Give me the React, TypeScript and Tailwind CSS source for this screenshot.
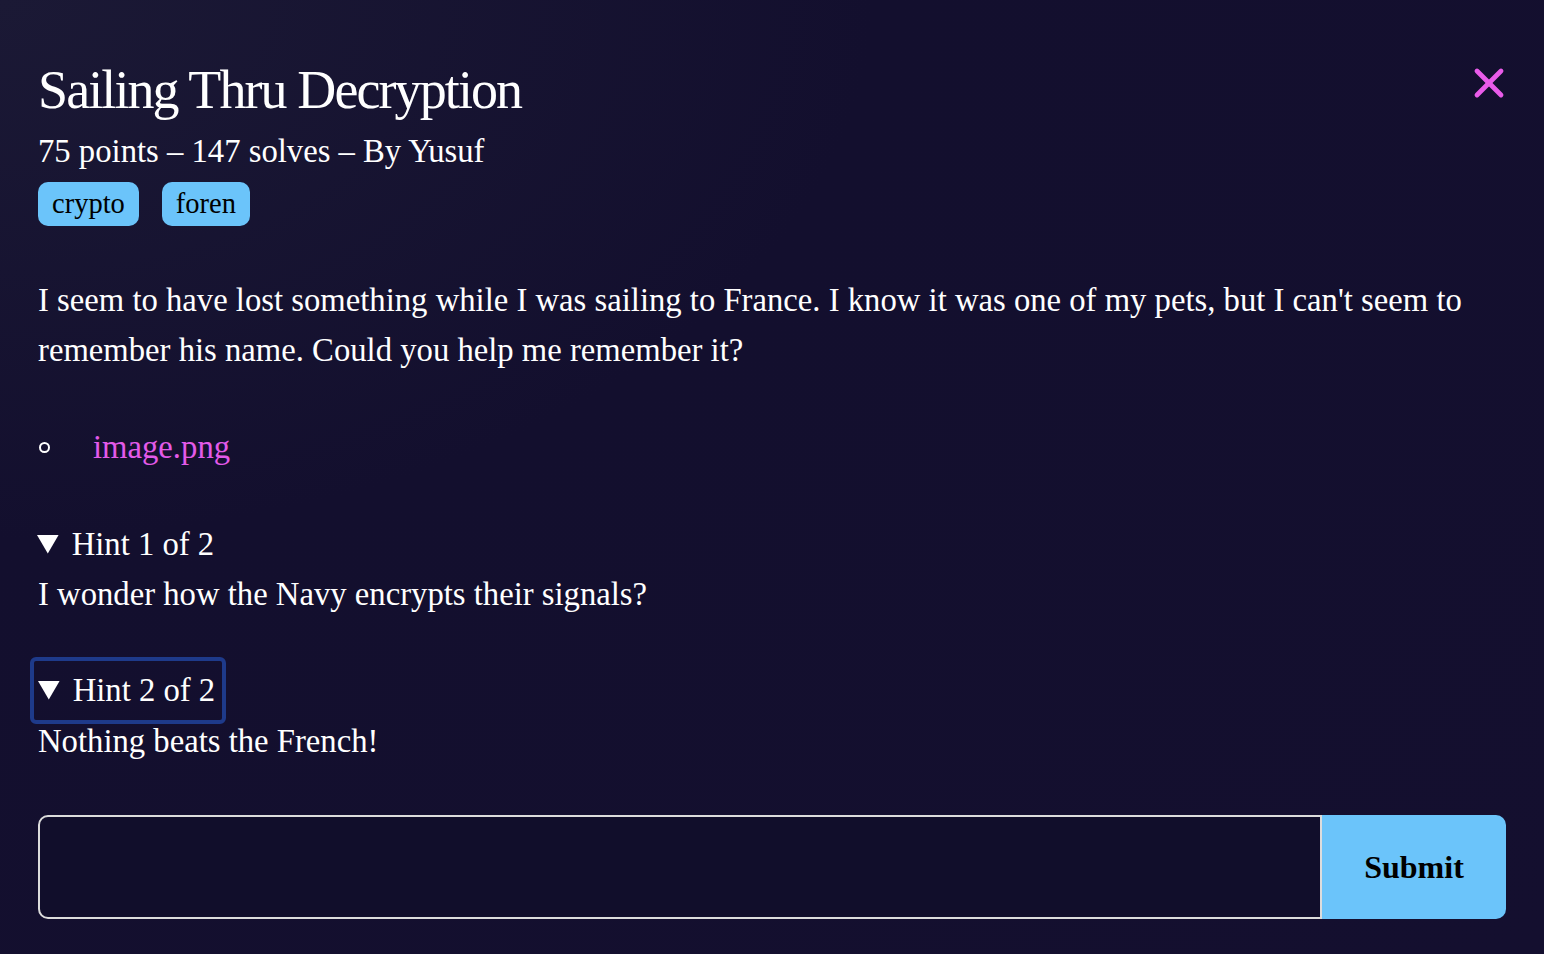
import React from "react";
import { X } from "lucide-react";

function App() {
  return (
    <div className="min-h-[954px] w-full bg-[#130f2e] bg-[radial-gradient(ellipse_at_top_left,#1b1935_0%,#130f2e_40%,#140f2f_100%)] font-['Liberation_Serif',serif] text-white">
      <div className="px-[38px] pt-[58px]">
        <div className="flex items-start justify-between">
          <div>
            <h1 className="text-[54px] leading-[64px] tracking-[-1.9px]">Sailing Thru Decryption</h1>
            <p className="mt-[9px] text-[32.7px] leading-[40px]">75 points – 147 solves – By Yusuf</p>
            <div className="mt-[11px] flex gap-[23px]">
              <span className="rounded-[10px] bg-[#6bc4fa] px-[14px] text-[28.5px] leading-[44px] text-black">crypto</span>
              <span className="rounded-[10px] bg-[#6bc4fa] px-[14px] text-[28.5px] leading-[44px] text-black">foren</span>
            </div>
          </div>
          <button className="mt-[1px] -mr-[7px] text-[#e95be9]">
            <X size={48} strokeWidth={2.4} />
          </button>
        </div>

        <p className="mt-[49px] text-[32.7px] leading-[50px]">
          I seem to have lost something while I was sailing to France. I know it was one of my pets, but I can't seem to remember his name. Could you help me remember it?
        </p>

        <ul className="mt-[47px] text-[32.7px] leading-[50px]">
          <li className="flex items-center gap-[43px]">
            <span className="ml-[1px] h-[11px] w-[11px] rounded-full border-2 border-white" />
            <a className="text-[#e35ae9]">image.png</a>
          </li>
        </ul>

        <details open className="mt-[47px] text-[32.7px] leading-[50px]">
          <summary className="-ml-[1px] w-fit cursor-pointer">Hint 1 of 2</summary>
          <p>I wonder how the Navy encrypts their signals?</p>
        </details>

        <details open className="mt-[38px] text-[32.7px] leading-[50px]">
          <summary className="-ml-[8px] w-fit cursor-pointer rounded-[6px] border-[4px] border-[#1e3a8a] pr-[7px] pl-[4px] leading-[59px]">Hint 2 of 2</summary>
          <p className="-mt-[8px]">Nothing beats the French!</p>
        </details>

        <div className="mt-[49px] flex h-[104px]">
          <input className="flex-1 rounded-l-[10px] border-2 border-[#dcdcdc] bg-[#110e2b] px-4 text-[30px] text-white outline-none" />
          <button className="w-[184px] rounded-r-[10px] bg-[#6bc4fa] text-[32px] font-bold text-black">Submit</button>
        </div>
      </div>
    </div>
  );
}

export default App;
